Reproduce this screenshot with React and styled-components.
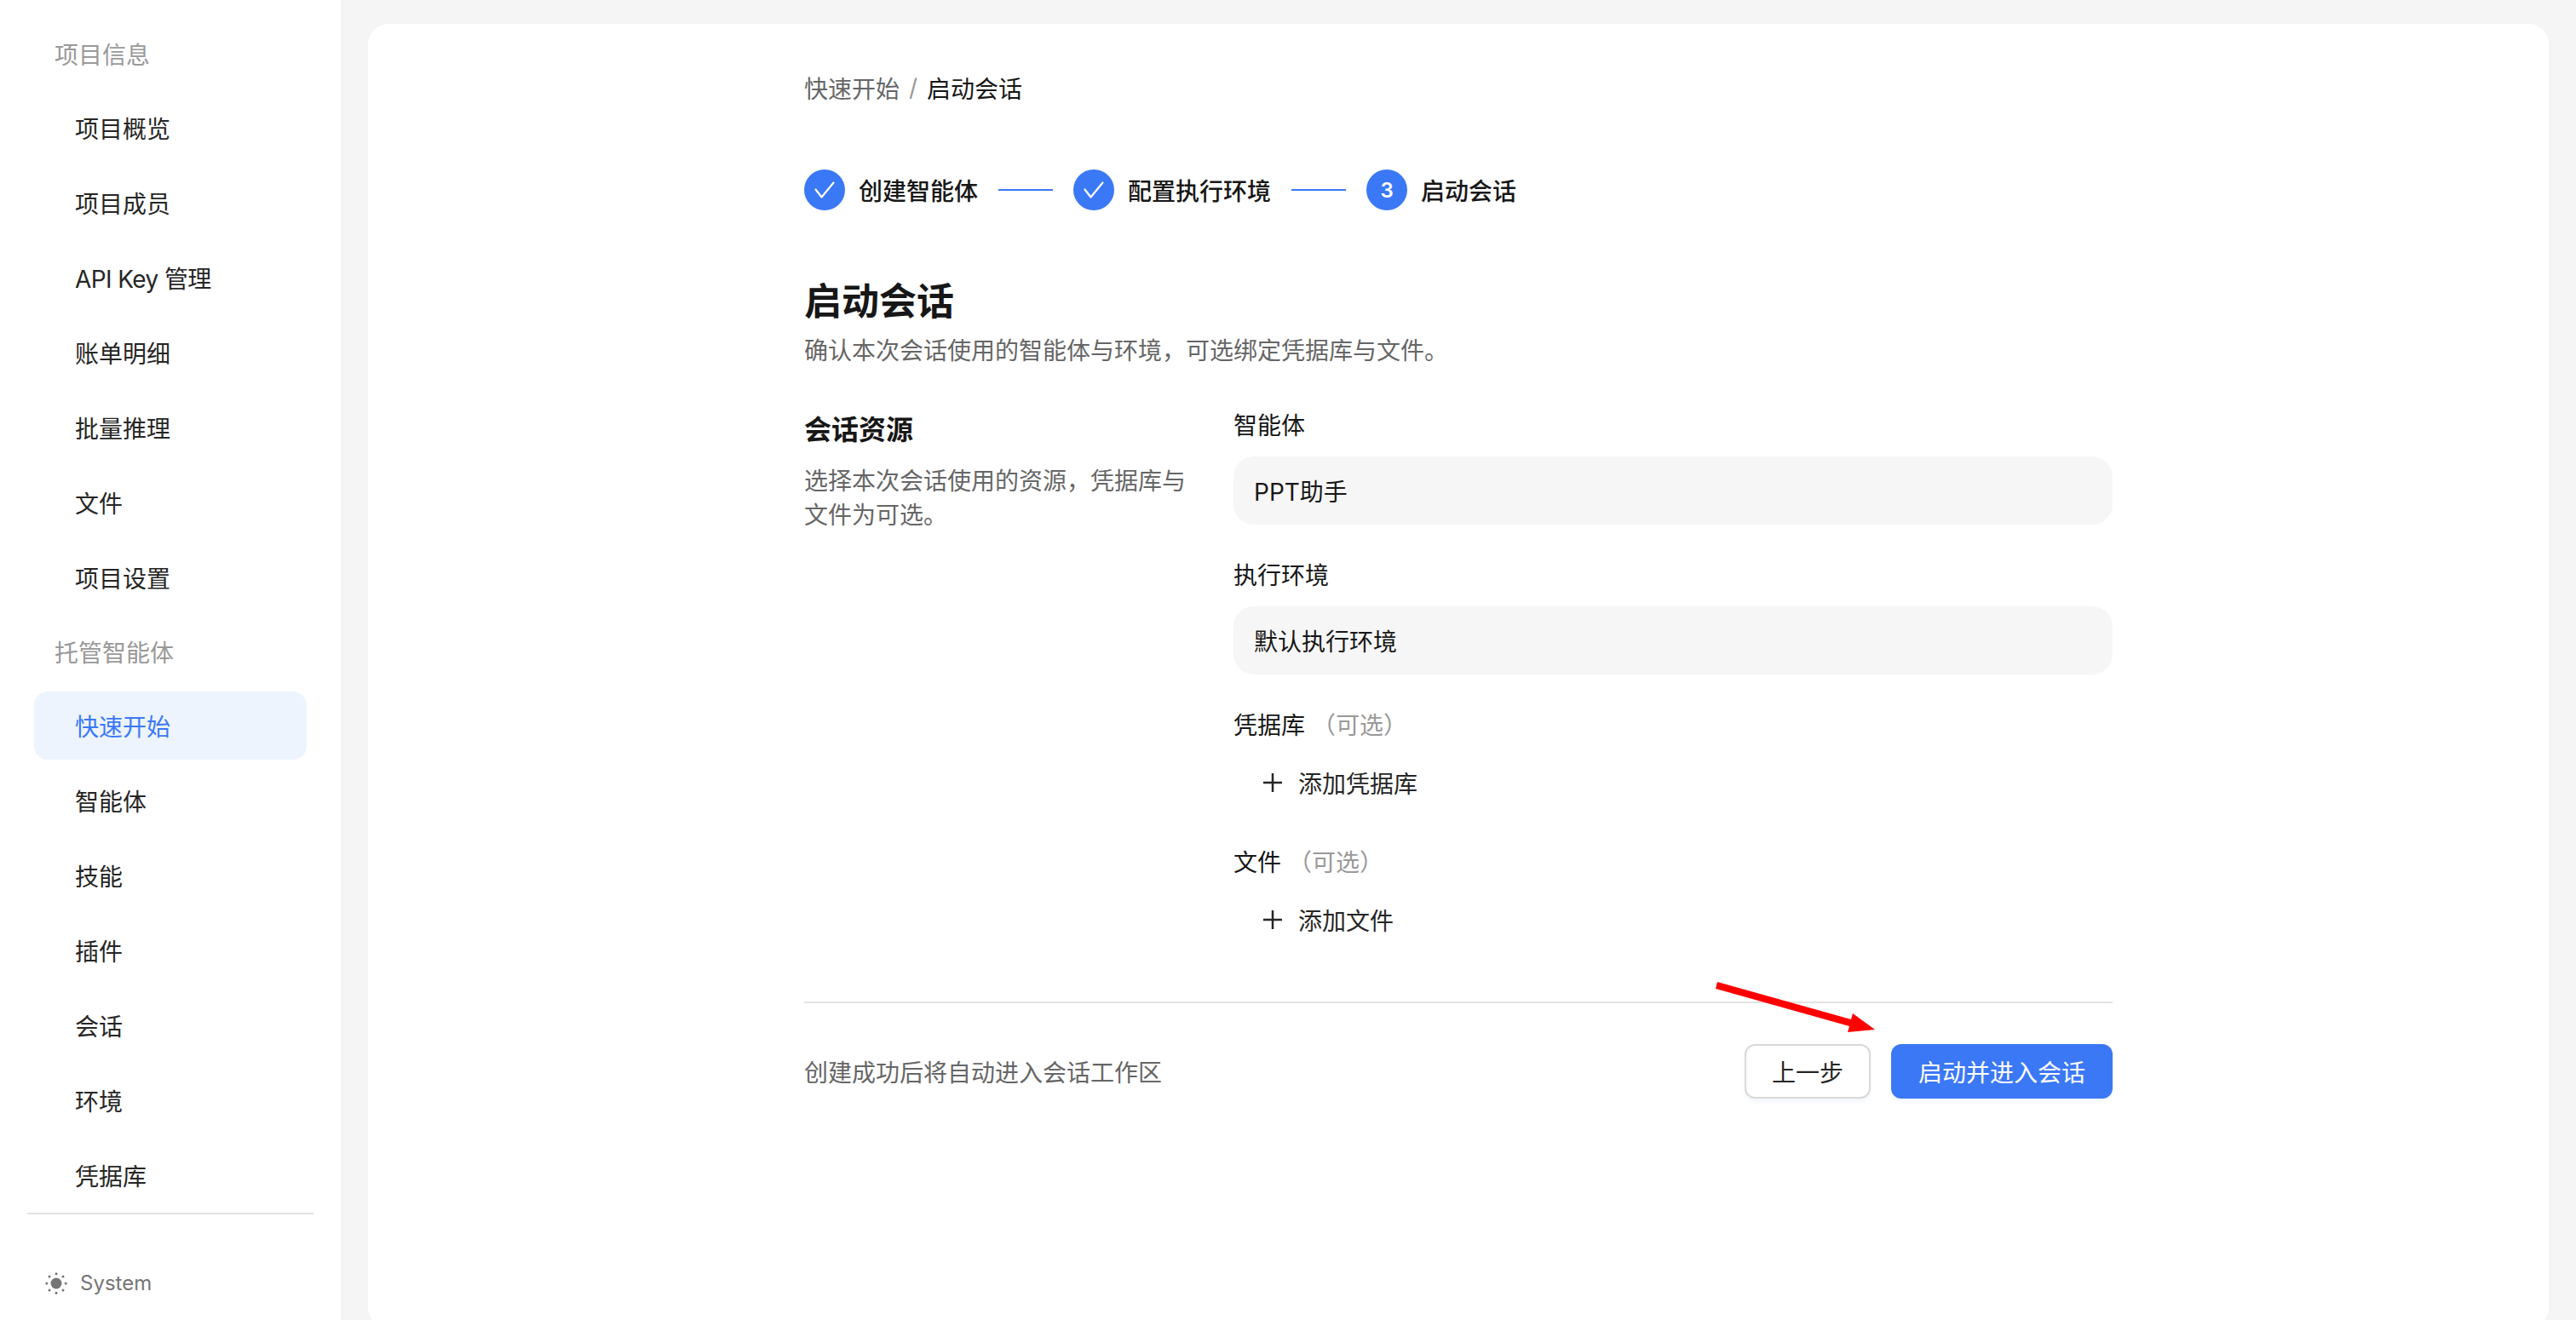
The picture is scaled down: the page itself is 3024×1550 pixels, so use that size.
import React from "react";
import styled, { createGlobalStyle } from "styled-components";

const GlobalStyle = createGlobalStyle`
  html, body {
    margin: 0;
    padding: 0;
    height: 100%;
    overflow: hidden;
    background: #f5f5f5;
  }
  * {
    box-sizing: border-box;
  }
  body {
    font-family: Inter, "Noto Sans CJK SC", sans-serif;
    color: #171717;
  }
`;

const Layout = styled.div`
  display: flex;
  height: 1550px;
`;

const Sidebar = styled.aside`
  width: 400px;
  flex-shrink: 0;
  background: #fff;
  padding: 24px 32px 0;
  display: flex;
  flex-direction: column;
`;

const NavList = styled.nav`
  display: flex;
  flex-direction: column;
  gap: 8px;
  padding: 0 8px;
`;

const SectionLabel = styled.div`
  height: 78px;
  padding-left: 24px;
  display: flex;
  align-items: center;
  font-size: 28px;
  color: #999;
`;

const NavItem = styled.a`
  height: 80px;
  padding-left: 48px;
  display: flex;
  align-items: center;
  border-radius: 16px;
  font-size: 28px;
  letter-spacing: ${(p) => (p.$tight ? "-0.6px" : "0")};
  color: ${(p) => (p.$active ? "#3b78f6" : "#262626")};
  background: ${(p) => (p.$active ? "#edf4fe" : "transparent")};
`;

const SidebarDivider = styled.div`
  height: 2px;
  background: #e3e3e3;
  margin-top: 4px;
`;

const ThemeToggle = styled.div`
  display: flex;
  align-items: center;
  gap: 15px;
  margin-top: 66px;
  padding-left: 21px;
  font-size: 24px;
  color: #757575;
`;

const Main = styled.main`
  flex: 1;
  padding: 28px 32px 0;
`;

const Card = styled.div`
  height: 1531px;
  background: #fff;
  border-radius: 24px;
  display: flex;
  justify-content: center;
`;

const Column = styled.div`
  width: 1536px;
  display: flex;
  flex-direction: column;
`;

const Breadcrumb = styled.div`
  display: flex;
  align-items: center;
  gap: 11px;
  margin-top: 55px;
  height: 40px;
  font-size: 28px;
  color: #666;
`;

const Separator = styled.span`
  color: #999;
`;

const Current = styled.span`
  color: #171717;
`;

const Stepper = styled.div`
  display: flex;
  align-items: center;
  gap: 24px;
  margin-top: 76px;
`;

const Step = styled.div`
  display: flex;
  align-items: center;
  gap: 16px;
  font-size: 28px;
  font-weight: 500;
  color: #171717;
`;

const StepDot = styled.span`
  width: 48px;
  height: 48px;
  border-radius: 50%;
  background: #3b78f6;
  color: #fff;
  font-size: 24px;
  font-weight: 600;
  display: flex;
  align-items: center;
  justify-content: center;
`;

const StepLine = styled.span`
  width: 64px;
  height: 2px;
  background: #3b78f6;
`;

const Title = styled.h1`
  margin: 79px 0 0;
  font-size: 44px;
  line-height: 56px;
  font-weight: 600;
`;

const Subtitle = styled.p`
  margin: 10px 0 0;
  font-size: 28px;
  line-height: 40px;
  color: #666;
`;

const FormGrid = styled.div`
  display: grid;
  grid-template-columns: 456px 1032px;
  column-gap: 48px;
  margin-top: 48px;
`;

const GroupTitle = styled.h2`
  margin: 5px 0 0;
  font-size: 32px;
  line-height: 40px;
  font-weight: 600;
`;

const GroupHint = styled.p`
  margin: 20px 0 0;
  font-size: 28px;
  line-height: 40px;
  color: #666;
`;

const Fields = styled.div`
  display: flex;
  flex-direction: column;
`;

const Field = styled.div`
  display: flex;
  flex-direction: column;
  gap: 16px;
  margin-bottom: ${(p) => p.$gap}px;
`;

const Label = styled.div`
  font-size: 28px;
  line-height: 40px;
  font-weight: 400;
`;

const Optional = styled.span`
  font-weight: 400;
  color: #999;
`;

const ValueBox = styled.div`
  height: 80px;
  padding: 0 24px;
  display: flex;
  align-items: center;
  border-radius: 24px;
  background: #f6f6f6;
  font-size: 28px;
  color: #171717;
`;

const AddRow = styled.div`
  height: 62px;
  padding-left: 34px;
  display: flex;
  align-items: center;
  gap: 18px;
  font-size: 28px;
  color: #262626;
`;

const Footer = styled.div`
  position: relative;
  display: flex;
  align-items: center;
  justify-content: space-between;
  margin-top: 23px;
  padding-top: 48px;
  border-top: 2px solid #e3e3e3;
`;

const FooterText = styled.span`
  font-size: 28px;
  color: #666;
`;

const Actions = styled.div`
  display: flex;
  gap: 24px;
`;

const Button = styled.button`
  height: 64px;
  width: ${(p) => p.$width}px;
  padding: 0;
  border-radius: 12px;
  font-family: inherit;
  font-size: 28px;
  border: ${(p) => (p.$primary ? "none" : "2px solid #d9d9d9")};
  background: ${(p) => (p.$primary ? "#3b78f6" : "#fff")};
  color: ${(p) => (p.$primary ? "#fff" : "#262626")};
  box-shadow: 0 4px 4px rgba(59, 120, 246, 0.06);
`;

const ArrowMark = styled.svg`
  position: absolute;
  right: 270px;
  top: -27px;
  width: 200px;
  height: 70px;
`;

const CheckIcon = () => (
  <svg width="28" height="28" viewBox="0 0 28 28" fill="none" stroke="#fff" strokeWidth="2.2" strokeLinecap="round" strokeLinejoin="round">
    <path d="M3.5 13.5 L10.5 22.5 L24.5 5.5" />
  </svg>
);

const PlusIcon = () => (
  <svg width="24" height="24" viewBox="0 0 24 24" fill="none" stroke="#262626" strokeWidth="2.5">
    <path d="M12 1v22M1 12h22" />
  </svg>
);

const SunIcon = () => (
  <svg width="26" height="26" viewBox="0 0 26 26" fill="#757575">
    <circle cx="13" cy="13" r="6.5" />
    <circle cx="13" cy="1.8" r="1.5" />
    <circle cx="13" cy="24.2" r="1.5" />
    <circle cx="1.8" cy="13" r="1.5" />
    <circle cx="24.2" cy="13" r="1.5" />
    <circle cx="5" cy="5" r="1.5" />
    <circle cx="21" cy="5" r="1.5" />
    <circle cx="5" cy="21" r="1.5" />
    <circle cx="21" cy="21" r="1.5" />
  </svg>
);

const topNav = ["项目概览", "项目成员", "API Key 管理", "账单明细", "批量推理", "文件", "项目设置"];
const agentNav = ["快速开始", "智能体", "技能", "插件", "会话", "环境", "凭据库"];

export default function App() {
  return (
    <>
      <GlobalStyle />
      <Layout>
        <Sidebar>
          <NavList>
            <SectionLabel>项目信息</SectionLabel>
            {topNav.map((item) => (
              <NavItem key={item} $tight={item.startsWith("API")}>
                {item}
              </NavItem>
            ))}
            <SectionLabel>托管智能体</SectionLabel>
            {agentNav.map((item) => (
              <NavItem key={item} $active={item === "快速开始"}>
                {item}
              </NavItem>
            ))}
          </NavList>
          <SidebarDivider />
          <ThemeToggle>
            <SunIcon />
            System
          </ThemeToggle>
        </Sidebar>
        <Main>
          <Card>
            <Column>
              <Breadcrumb>
                快速开始
                <Separator>/</Separator>
                <Current>启动会话</Current>
              </Breadcrumb>
              <Stepper>
                <Step>
                  <StepDot>
                    <CheckIcon />
                  </StepDot>
                  创建智能体
                </Step>
                <StepLine />
                <Step>
                  <StepDot>
                    <CheckIcon />
                  </StepDot>
                  配置执行环境
                </Step>
                <StepLine />
                <Step>
                  <StepDot>3</StepDot>
                  启动会话
                </Step>
              </Stepper>
              <Title>启动会话</Title>
              <Subtitle>确认本次会话使用的智能体与环境，可选绑定凭据库与文件。</Subtitle>
              <FormGrid>
                <div>
                  <GroupTitle>会话资源</GroupTitle>
                  <GroupHint>选择本次会话使用的资源，凭据库与文件为可选。</GroupHint>
                </div>
                <Fields>
                  <Field $gap={40}>
                    <Label>智能体</Label>
                    <ValueBox>PPT助手</ValueBox>
                  </Field>
                  <Field $gap={40}>
                    <Label>执行环境</Label>
                    <ValueBox>默认执行环境</ValueBox>
                  </Field>
                  <Field $gap={43}>
                    <Label>
                      凭据库 <Optional>（可选）</Optional>
                    </Label>
                    <AddRow>
                      <PlusIcon />
                      添加凭据库
                    </AddRow>
                  </Field>
                  <Field $gap={42}>
                    <Label>
                      文件 <Optional>（可选）</Optional>
                    </Label>
                    <AddRow>
                      <PlusIcon />
                      添加文件
                    </AddRow>
                  </Field>
                </Fields>
              </FormGrid>
              <Footer>
                <FooterText>创建成功后将自动进入会话工作区</FooterText>
                <Actions>
                  <Button $width={148}>上一步</Button>
                  <Button $primary $width={260}>启动并进入会话</Button>
                </Actions>
                <ArrowMark viewBox="0 0 200 70">
                  <path d="M6 2 L163 46 L165 39 L191 58 L159 61 L161 54 L4 10 Z" fill="#ff0000" />
                </ArrowMark>
              </Footer>
            </Column>
          </Card>
        </Main>
      </Layout>
    </>
  );
}
